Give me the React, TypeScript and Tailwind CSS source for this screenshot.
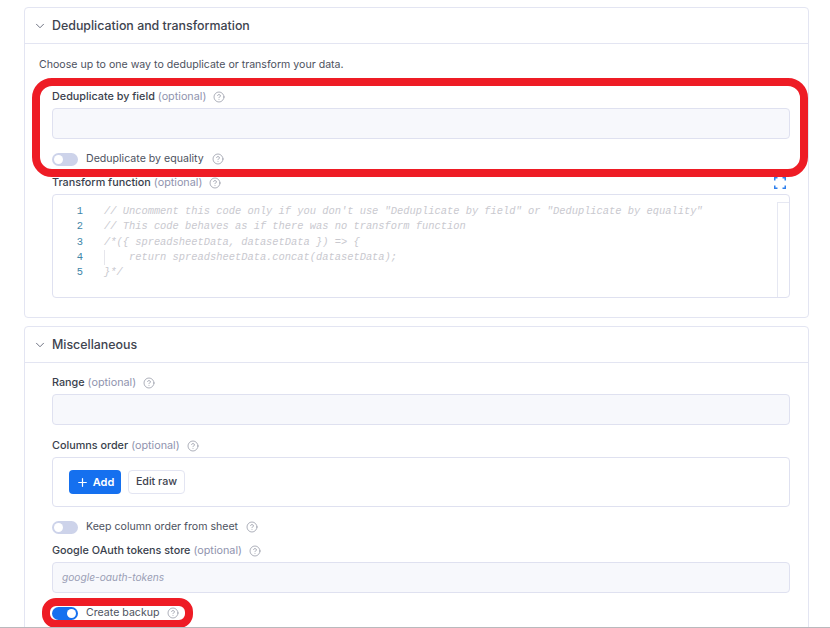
import { ReactNode } from "react";
import { ChevronDown, CircleHelp, Plus } from "lucide-react";

const codeLines = [
  `// Uncomment this code only if you don't use "Deduplicate by field" or "Deduplicate by equality"`,
  `// This code behaves as if there was no transform function`,
  `/*({ spreadsheetData, datasetData }) => {`,
  `    return spreadsheetData.concat(datasetData);`,
  `}*/`,
];

function Help({ className = "ml-[7px]" }: { className?: string }) {
  return <CircleHelp size={12} strokeWidth={1.4} className={`${className} shrink-0 text-[#8b8f9e]`} />;
}

function Label({ name, optional = true }: { name: string; optional?: boolean }) {
  return (
    <div className="flex h-[14px] items-center whitespace-nowrap pt-[1px] text-[10.8px] leading-[14px]">
      <span className="font-medium text-[#3a3f4d]">{name}</span>
      {optional && <span className="ml-[3px] text-[#8f93ae]">(optional)</span>}
      <Help />
    </div>
  );
}

function Toggle({ label, on = false }: { label: string; on?: boolean }) {
  return (
    <div className="flex h-[14px] items-center whitespace-nowrap text-[10.6px] text-[#4d5260]">
      <div className={`flex h-[13px] w-[26px] items-center rounded-full px-[2px] ${on ? "justify-end bg-[#1570ef]" : "justify-start bg-[#cdd3ea]"}`}>
        <div className="h-[9px] w-[9px] rounded-full bg-white" />
      </div>
      <span className="ml-2">{label}</span>
      <Help className="ml-[8px]" />
    </div>
  );
}

function Input({ placeholder }: { placeholder?: string }) {
  return (
    <div className="flex h-[31px] items-center rounded-[4px] border border-[#dfe1f0] bg-[#f7f8fc] px-[9px] text-[10.2px] italic text-[#9a9eb5]">
      {placeholder}
    </div>
  );
}

function Section({ title, children, className }: { title: string; children: ReactNode; className?: string }) {
  return (
    <section className={`rounded-[4px] border border-[#e3e5f2] bg-white ${className}`}>
      <header className="flex h-[36px] items-center border-b border-[#e3e5f2] pl-[8px] pt-[1px]">
        <ChevronDown size={14} strokeWidth={1.5} className="text-[#5a5f70]" />
        <h2 className="ml-[5px] text-[12.4px] font-medium text-[#40444f]">{title}</h2>
      </header>
      {children}
    </section>
  );
}

function CodeEditor() {
  return (
    <div className="mt-[5px] flex h-[104px] overflow-hidden rounded-[4px] border border-[#dfe1f0] pt-[7px] font-['Liberation_Mono',monospace] text-[10.4px] leading-[15.3px]">
      <div className="w-[30px] shrink-0 pt-[2px] text-right text-[#3f86a8] not-italic">
        {codeLines.map((_, i) => (
          <div key={i}>{i + 1}</div>
        ))}
      </div>
      <div className="relative ml-[21px] flex-1 whitespace-pre pt-[2px] italic text-[#c9c9cf]">
        {codeLines.map((line) => (
          <div key={line}>{line}</div>
        ))}
        <div className="absolute left-0 top-[48px] h-[15px] w-px bg-[#e6e6ec]" />
      </div>
      <div className="w-[12px] shrink-0 border-l border-t border-[#e6e8f2]" />
    </div>
  );
}

export default function App() {
  return (
    <div className="relative h-[628px] w-[830px] overflow-hidden bg-white font-['Inter',sans-serif]">
      <div className="ml-[24px] w-[785px] pt-[7px]">
        <Section title="Deduplication and transformation" className="h-[311px]">
          <div className="pl-[14px] pt-[14px] text-[10.6px] leading-[14px] text-[#4d5260]">
            Choose up to one way to deduplicate or transform your data.
          </div>
          <div className="pl-[27px] pr-[18px] pt-[17px]">
            <Label name="Deduplicate by field" />
            <div className="mt-[5px]">
              <Input />
            </div>
            <div className="mt-[13px]">
              <Toggle label="Deduplicate by equality" />
            </div>
            <div className="mt-[9px] flex items-center justify-between">
              <Label name="Transform function" />
              <svg width="12" height="12" viewBox="0 0 12 12" fill="none" stroke="#2f80ed" strokeWidth="1.5" className="mr-[4px] mt-[1px]">
                <path d="M.75 3.5V.75H3.5M8.5.75h2.75V3.5M11.25 8.5v2.75H8.5M3.5 11.25H.75V8.5" />
              </svg>
            </div>
            <CodeEditor />
          </div>
        </Section>

        <Section title="Miscellaneous" className="mt-[8px] h-[320px]">
          <div className="pl-[27px] pr-[18px] pt-[12px]">
            <Label name="Range" />
            <div className="mt-[5px]">
              <Input />
            </div>
            <div className="mt-[13px]">
              <Label name="Columns order" />
            </div>
            <div className="mt-[5px] flex h-[50px] items-center gap-[7px] rounded-[4px] border border-[#dfe1f0] bg-white pl-[16px]">
              <button className="flex h-[24px] w-[52px] items-center justify-center gap-[4px] rounded-[4px] bg-[#1570ef] text-[11px] font-semibold text-white">
                <Plus size={13} strokeWidth={2.25} />
                Add
              </button>
              <button className="h-[24px] w-[57px] rounded-[4px] border border-[#e3e5f2] bg-white text-[10.7px] font-medium text-[#40444f]">
                Edit raw
              </button>
            </div>
            <div className="mt-[13px]">
              <Toggle label="Keep column order from sheet" />
            </div>
            <div className="mt-[9px]">
              <Label name="Google OAuth tokens store" />
            </div>
            <div className="mt-[5px]">
              <Input placeholder="google-oauth-tokens" />
            </div>
            <div className="mt-[13px]">
              <Toggle label="Create backup" on />
            </div>
          </div>
        </Section>
      </div>

      {/* annotations drawn on top of the screenshot */}
      <div className="absolute left-[32px] top-[78px] h-[99px] w-[776px] rounded-[20px] border-[8px] border-[#ee1c25]" />
      <div className="absolute left-[42px] top-[598px] h-[30px] w-[151px] rounded-[14px] border-[8px] border-[#ee1c25]" />
      <div className="absolute bottom-0 left-0 h-px w-full bg-[#b9b9bd]" />
    </div>
  );
}
